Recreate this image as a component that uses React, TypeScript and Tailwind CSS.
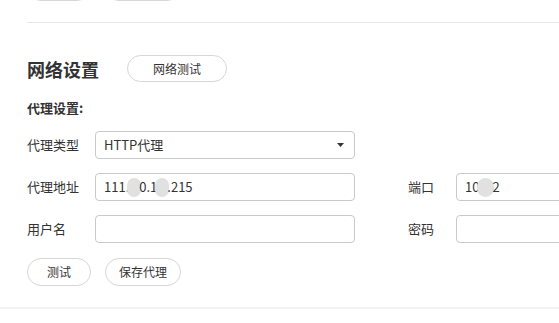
import React from 'react';

const font = { fontFamily: '"Noto Sans CJK SC", "Noto Sans", sans-serif' };

function PillButton({ children, className = '' }: { children?: React.ReactNode; className?: string }) {
  return (
    <button
      className={`h-[28px] rounded-full border border-[#d6d6d6] bg-white text-[12px] text-[#333] leading-none ${className}`}
    >
      {children}
    </button>
  );
}

function Blob({ w = 14 }: { w?: number }) {
  return (
    <span
      className="inline-block h-[19px] align-middle rounded-full bg-[#e1e1e1] -mx-[2px]"
      style={{ width: w }}
    />
  );
}

function Field({ children }: { children?: React.ReactNode }) {
  return (
    <div className="flex h-[28px] w-[260px] shrink-0 items-center rounded-[4px] border border-[#c9c9c9] bg-white pl-[8px] pr-[10px] text-[13px] text-[#333]">
      {children}
    </div>
  );
}

function Label({ children, w }: { children: React.ReactNode; w: string }) {
  return <div className={`${w} shrink-0 text-[13px] text-[#333]`}>{children}</div>;
}

export default function App() {
  return (
    <div className="h-[323px] w-[559px] overflow-hidden bg-white" style={font}>
      {/* bottom edge of the previous section's buttons */}
      <div className="-mt-[27px] flex gap-[14px] pl-[27px]">
        <PillButton className="w-[64px]" />
        <PillButton className="w-[76px]" />
      </div>
      <div className="ml-[27px] mt-[21px] h-px bg-[#e6e6e6]" />

      <div className="pl-[27px]">
        <div className="mt-[32px] flex h-[27px] items-center">
          <h2 className="w-[100px] text-[18px] font-bold text-[#333] leading-none">网络设置</h2>
          <button className="h-[27px] w-[100px] rounded-full border border-[#d6d6d6] bg-white text-[12px] text-[#333]">
            网络测试
          </button>
        </div>

        <div className="mt-[17px] h-[18px] text-[13px] font-bold leading-[18px] text-[#333]">代理设置:</div>

        <div className="mt-[14px] flex flex-col gap-[14px] w-[700px]">
          <div className="flex items-center">
            <Label w="w-[68px]">代理类型</Label>
            <Field>
              <span className="flex-1">HTTP代理</span>
              <svg width="7" height="4" viewBox="0 0 7 4">
                <path d="M0 0 H7 L3.5 4 Z" fill="#333" />
              </svg>
            </Field>
          </div>
          <div className="flex items-center">
            <Label w="w-[68px]">代理地址</Label>
            <Field>
              <span className="whitespace-nowrap">
                111.<Blob />0.1<Blob />.215
              </span>
            </Field>
            <Label w="ml-[53px] w-[48px]">端口</Label>
            <Field>
              <span className="whitespace-nowrap">
                10<Blob w={17} />2
              </span>
            </Field>
          </div>
          <div className="flex items-center">
            <Label w="w-[68px]">用户名</Label>
            <Field />
            <Label w="ml-[53px] w-[48px]">密码</Label>
            <Field />
          </div>
        </div>

        <div className="mt-[15px] flex gap-[14px]">
          <PillButton className="w-[64px]">测试</PillButton>
          <PillButton className="w-[76px]">保存代理</PillButton>
        </div>
      </div>

      <div className="mt-[21px] h-[2px] bg-[#f3f3f3]" />
    </div>
  );
}
